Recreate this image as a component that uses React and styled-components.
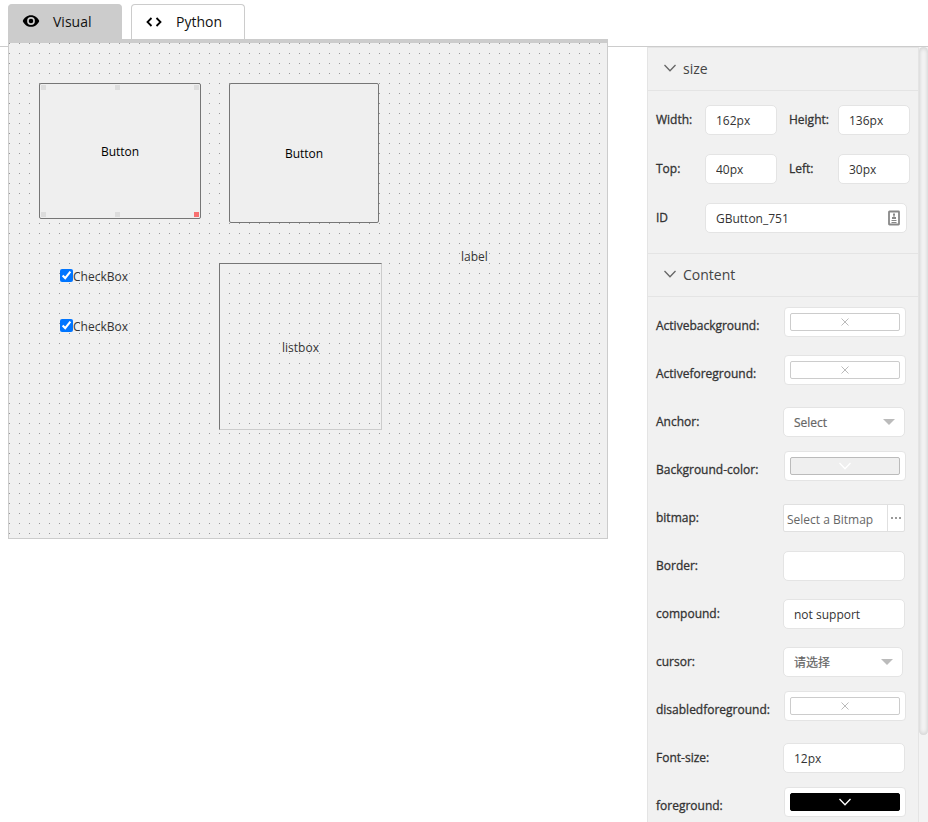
import React from "react";
import styled, { createGlobalStyle } from "styled-components";

const GlobalStyle = createGlobalStyle`
  *, *::before, *::after { box-sizing: border-box; }
  body {
    margin: 0;
    background: #fff;
    color: #333;
    font-family: "Open Sans", "Noto Sans CJK SC", sans-serif;
    font-size: 12px;
  }
  button, input, select { font: inherit; color: inherit; margin: 0; }
`;

const Page = styled.div`
  display: flex;
  height: 100vh;
  overflow: hidden;
  background: linear-gradient(#ccc, #ccc) 0 46px / 100% 1px no-repeat #fff;
`;

const Workspace = styled.main`
  flex: 1;
  min-width: 0;
  padding: 4px 39px 0 8px;
`;

const TabBar = styled.div`
  display: flex;
  gap: 9px;
  border-bottom: 4px solid #ccc;
`;

const Tab = styled.button`
  display: flex;
  align-items: center;
  gap: 13px;
  width: 114px;
  height: 35px;
  padding: 0 13px 2px;
  border: 1px solid #ccc;
  border-bottom: 0;
  border-radius: 4px 4px 0 0;
  background: ${(p) => (p.$active ? "#ccc" : "#fff")};
  color: #111;
  font-size: 14px;
`;

const Canvas = styled.section`
  position: relative;
  height: 496px;
  border: 1px solid #ccc;
  border-top: 0;
  background: conic-gradient(at 1px 1px, transparent 75%, #999 0) 0 0 / 10px 10px #f0f0f0;
`;

const Placed = styled.div`
  position: absolute;
  left: ${(p) => p.$x}px;
  top: ${(p) => p.$y}px;
  width: ${(p) => (p.$w ? `${p.$w}px` : "auto")};
  height: ${(p) => (p.$h ? `${p.$h}px` : "auto")};
`;

const WidgetButton = styled.button`
  width: 100%;
  height: 100%;
  padding: 0;
  border: 1px solid #767676;
  border-radius: 2px;
  background: #efefef;
  color: #000;
`;

const Handle = styled.span`
  position: absolute;
  width: 5px;
  height: 5px;
  background: ${(p) => (p.$active ? "#f87171" : "#ddd")};
  ${(p) => p.$v}: 2px;
  ${(p) => (p.$h === "center" ? "left: calc(50% - 5px)" : `${p.$h}: 2px`)};
`;

const WidgetCheck = styled.label`
  display: flex;
  align-items: flex-start;
  height: 16px;
  line-height: 16px;

  input { width: 13px; height: 13px; }
`;

const WidgetList = styled.div`
  display: flex;
  align-items: center;
  justify-content: center;
  width: 100%;
  height: 100%;
  padding-top: 2px;
  border: 1px solid;
  border-color: #767676 #ccc #ccc #767676;
`;

const Side = styled.aside`
  display: flex;
  width: 281px;
  margin-top: 47px;
  overflow: hidden;
  background: #f1f1f1;
`;

const Properties = styled.div`
  flex: 1;
  min-width: 0;
  border: 1px solid #e4e4e4;
  border-bottom: 0;
`;

const Track = styled.div`
  width: 9px;
  background: #f3f3f3;
`;

const Thumb = styled.div`
  height: calc(100% - 87px);
  border-radius: 5px;
  background: #f5f5f5;
  box-shadow: inset 0 0 5px rgba(0, 0, 0, 0.2);
`;

const SectionTitle = styled.button`
  display: flex;
  align-items: center;
  gap: 7px;
  width: 100%;
  height: 43px;
  padding: 0 16px 2px;
  border: 0;
  border-bottom: 1px solid #e4e4e4;
  background: none;
  color: #444;
  font-size: 14px;
`;

const SizeFields = styled.div`
  display: grid;
  grid-template-columns: 49px 72px 61px 72px;
  row-gap: 19px;
  align-items: center;
  padding: 14px 8px 20px;
  border-bottom: 1px solid #e4e4e4;
`;

const ContentFields = styled.div`
  padding: 5px 13px 0 8px;
`;

const FieldRow = styled.div`
  display: flex;
  align-items: center;
  justify-content: space-between;
  height: 48px;
`;

const FieldLabel = styled.label`
  padding: 0 0 2px ${(p) => (p.$second ? 12 : 0)}px;
  color: #333;
  -webkit-text-stroke: 0.3px #333;
  white-space: nowrap;
`;

const TextInput = styled.input`
  width: ${(p) => p.$width || "100%"};
  height: 30px;
  padding: 0 10px;
  border: 1px solid #e4e4e4;
  border-radius: 5px;
  background: #fff;
`;

const IdBox = styled.div`
  grid-column: 2 / -1;
  display: flex;
  align-items: center;
  width: 202px;
  height: 30px;
  padding-right: 6px;
  border: 1px solid #e4e4e4;
  border-radius: 5px;
  background: #fff;

  input {
    flex: 1;
    min-width: 0;
    padding: 0 10px;
    border: 0;
    background: none;
  }
`;

const Control = styled.div`
  display: flex;
  width: 122px;
`;

const SelectBox = styled.div`
  display: grid;
  align-items: center;
  width: ${(p) => (p.$narrow ? 120 : 122)}px;

  select, svg { grid-area: 1 / 1; }
  svg { justify-self: end; margin-right: 10px; pointer-events: none; }
`;

const SelectInput = styled.select`
  appearance: none;
  width: 100%;
  height: 30px;
  padding: 0 10px;
  border: 1px solid #e4e4e4;
  border-radius: 5px;
  background: #fff;
  color: #666;
  -webkit-text-stroke: 0.2px #666;
`;

const ColorButton = styled.button`
  align-self: flex-start;
  width: 122px;
  height: 30px;
  margin: 5px -1px 0 0;
  padding: 5px;
  border: 1px solid #e4e4e4;
  border-radius: 4px;
  background: #fff;
`;

const Swatch = styled.span`
  display: flex;
  align-items: center;
  justify-content: center;
  height: 18px;
  border: 1px solid ${(p) => p.$edge};
  border-radius: 2px;
  background: ${(p) => p.$fill};
`;

const BitmapBox = styled.div`
  display: flex;
  width: 122px;
  height: 28px;
  border: 1px solid #e0e0e0;
  border-radius: 2px;
  background: #fff;

  input {
    flex: 1;
    min-width: 0;
    padding: 2px 3px 0;
    border: 0;
    background: none;
    color: #666;
  }
  input::placeholder { color: #666; opacity: 1; }
  button {
    display: flex;
    align-items: center;
    justify-content: center;
    width: 17px;
    padding: 0;
    border: 0;
    border-left: 1px solid #e0e0e0;
    background: none;
  }
`;

const EyeIcon = () => (
  <svg width="18" height="18" viewBox="0 0 24 24" fill="#000" aria-hidden="true">
    <path d="M12 4.2C7 4.2 2.7 7.4 1 12c1.7 4.6 6 7.8 11 7.8s9.300-3.200 11-7.800c-1.700-4.600-6-7.800-11-7.800zM12 17.200a5.200 5.200 0 1 1 0-10.400 5.200 5.200 0 0 1 0 10.400zm0-8.200a3 3 0 1 0 0 6 3 3 0 0 0 0-6z" />
  </svg>
);

const CodeIcon = () => (
  <svg width="18" height="18" viewBox="0 0 18 18" fill="none" stroke="#000" strokeWidth="1.800" aria-hidden="true">
    <path d="M6.500 6 2.500 10l4 4M11.500 6l4 4-4 4" />
  </svg>
);

const Chevron = ({ color = "#666", width = 12 }) => (
  <svg width={width} height={width} viewBox="0 0 12 12" fill="none" stroke={color} strokeWidth="1.300" aria-hidden="true">
    <path d="M0.500 3 6 8.800 11.500 3" />
  </svg>
);

const Cross = () => (
  <svg width="8" height="8" viewBox="0 0 8 8" stroke="#bbb" aria-hidden="true">
    <path d="M.5.5l7 7M7.500.5l-7 7" />
  </svg>
);

const Dots = () => (
  <svg width="10" height="2" viewBox="0 0 10 2" fill="#999" aria-hidden="true">
    <path d="M0 0h2v2H0zM4 0h2v2H4zM8 0h2v2H8z" />
  </svg>
);

const DropArrow = () => (
  <svg width="12" height="6" viewBox="0 0 12 6" fill="#bbb" aria-hidden="true">
    <path d="M0 0h12L6 6z" />
  </svg>
);

const AutofillIcon = () => (
  <svg width="12" height="16" viewBox="0 0 12 16" aria-hidden="true">
    <rect x="1" y="1.500" width="10" height="13" rx="0.500" fill="#fff" stroke="#888" strokeWidth="1.800" />
    <path d="M5 3.500h2v2h-.5V7H8v2H4V7h1.500V5.500H5zM3.500 10h5v1h-5zM3.500 12h5v1h-5z" fill="#888" />
  </svg>
);

const handles = [
  ["top", "left"], ["top", "center"], ["top", "right"],
  ["bottom", "left"], ["bottom", "center"], ["bottom", "right"],
];

const sizes = [
  { id: "width", label: "Width:", value: "162px" },
  { id: "height", label: "Height:", value: "136px" },
  { id: "top", label: "Top:", value: "40px" },
  { id: "left", label: "Left:", value: "30px" },
];

const fields = [
  { label: "Activebackground:", type: "color" },
  { label: "Activeforeground:", type: "color" },
  { label: "Anchor:", type: "select", value: "Select" },
  { label: "Background-color:", type: "color", fill: "#efefef", edge: "#bbb" },
  { label: "bitmap:", type: "bitmap" },
  { label: "Border:", type: "text", value: "" },
  { label: "compound:", type: "text", value: "not support" },
  { label: "cursor:", type: "select", value: "请选择", narrow: true },
  { label: "disabledforeground:", type: "color" },
  { label: "Font-size:", type: "text", value: "12px" },
  { label: "foreground:", type: "color", fill: "#000", edge: "#000" },
];

function Field({ field }) {
  const id = field.label.replace(":", "").toLowerCase();
  return (
    <FieldRow>
      <FieldLabel htmlFor={id}>{field.label}</FieldLabel>
      {field.type === "color" && (
        <ColorButton id={id}>
          <Swatch $fill={field.fill || "#fff"} $edge={field.edge || "#ccc"}>
            {field.fill ? <Chevron color="#fff" /> : <Cross />}
          </Swatch>
        </ColorButton>
      )}
      {field.type === "text" && <TextInput id={id} $width="122px" defaultValue={field.value} />}
      {field.type === "select" && (
        <Control>
          <SelectBox $narrow={field.narrow}>
            <SelectInput id={id}><option>{field.value}</option></SelectInput>
            <DropArrow />
          </SelectBox>
        </Control>
      )}
      {field.type === "bitmap" && (
        <BitmapBox>
          <input id={id} placeholder="Select a Bitmap" />
          <button aria-label="Browse bitmaps"><Dots /></button>
        </BitmapBox>
      )}
    </FieldRow>
  );
}

export default function App() {
  return (
    <>
      <GlobalStyle />
      <Page>
        <Workspace>
          <TabBar role="tablist">
            <Tab role="tab" aria-selected="true" $active><EyeIcon />Visual</Tab>
            <Tab role="tab" aria-selected="false"><CodeIcon />Python</Tab>
          </TabBar>
          <Canvas>
            <Placed $x={30} $y={40} $w={162} $h={136}>
              <WidgetButton>Button</WidgetButton>
              {handles.map(([v, h]) => (
                <Handle key={v + h} $v={v} $h={h} $active={v === "bottom" && h === "right"} />
              ))}
            </Placed>
            <Placed $x={220} $y={40} $w={150} $h={140}><WidgetButton>Button</WidgetButton></Placed>
            <Placed $x={51} $y={226}>
              <WidgetCheck><input type="checkbox" defaultChecked />CheckBox</WidgetCheck>
            </Placed>
            <Placed $x={51} $y={276}>
              <WidgetCheck><input type="checkbox" defaultChecked />CheckBox</WidgetCheck>
            </Placed>
            <Placed $x={210} $y={220} $w={163} $h={167}><WidgetList>listbox</WidgetList></Placed>
            <Placed $x={452} $y={205}>label</Placed>
          </Canvas>
        </Workspace>
        <Side>
          <Properties>
            <SectionTitle aria-expanded="true"><Chevron />size</SectionTitle>
            <SizeFields>
              {sizes.map((s, i) => (
                <React.Fragment key={s.id}>
                  <FieldLabel htmlFor={s.id} $second={i % 2 === 1}>{s.label}</FieldLabel>
                  <TextInput id={s.id} defaultValue={s.value} />
                </React.Fragment>
              ))}
              <FieldLabel htmlFor="widget-id">ID</FieldLabel>
              <IdBox>
                <input id="widget-id" defaultValue="GButton_751" />
                <AutofillIcon />
              </IdBox>
            </SizeFields>
            <SectionTitle aria-expanded="true"><Chevron />Content</SectionTitle>
            <ContentFields>
              {fields.map((f) => <Field key={f.label} field={f} />)}
            </ContentFields>
          </Properties>
          <Track><Thumb /></Track>
        </Side>
      </Page>
    </>
  );
}
